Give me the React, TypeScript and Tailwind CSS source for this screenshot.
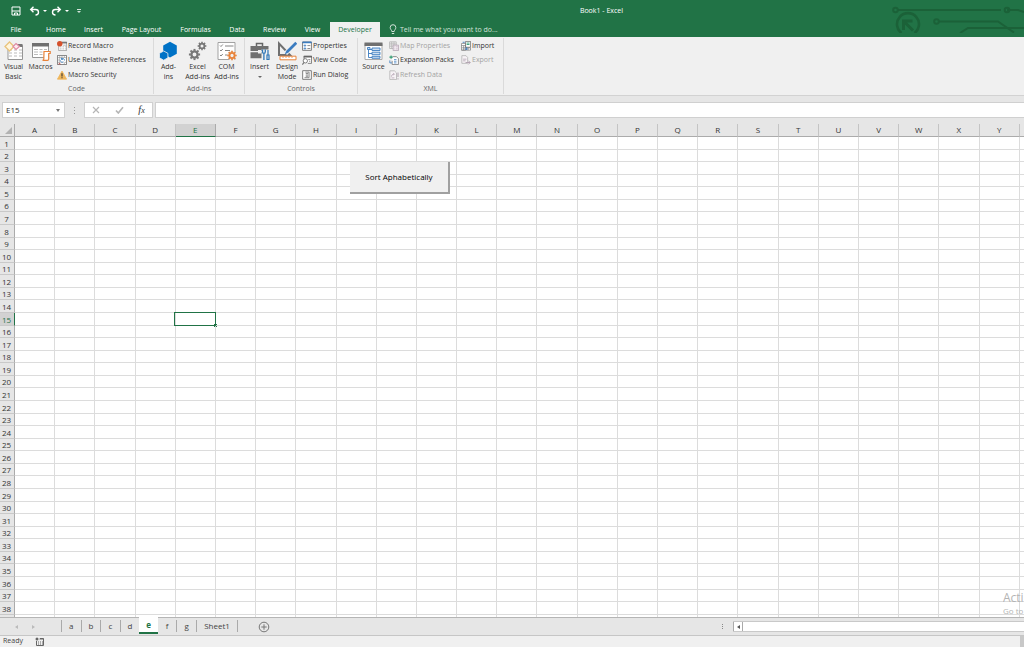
import type { ReactNode } from "react";

const columns = "ABCDEFGHIJKLMNOPQRSTUVWXY".split("");
const rows = Array.from({ length: 39 }, (_, i) => i + 1);
const selected = { column: "E", row: 15 };

const menuTabs = [
  { label: "File", width: "w-[32px] mr-[5px]" },
  { label: "Home", width: "w-[38px]" },
  { label: "Insert", width: "w-[37px]" },
  { label: "Page Layout", width: "w-[59px]" },
  { label: "Formulas", width: "w-[49px]" },
  { label: "Data", width: "w-[34px]" },
  { label: "Review", width: "w-[41px]" },
  { label: "View", width: "w-[35px]" },
];

const sheets = ["a", "b", "c", "d", "e", "f", "g"];

function Big({ children }: { children: ReactNode }) {
  return (
    <svg viewBox="0 0 20 20" className="h-5 w-5 shrink-0" fill="none" aria-hidden="true">
      {children}
    </svg>
  );
}

function Small({ children }: { children: ReactNode }) {
  return (
    <svg viewBox="0 0 12 12" className="h-[10px] w-[10px] shrink-0" fill="none" aria-hidden="true">
      {children}
    </svg>
  );
}

function Gear({ cx, cy, r, color }: { cx: number; cy: number; r: number; color: string }) {
  return (
    <g stroke={color}>
      <circle cx={cx} cy={cy} r={r * 0.62} strokeWidth={r * 0.46} />
      {[0, 45, 90, 135, 180, 225, 270, 315].map((a) => (
        <path
          key={a}
          d={`M${cx} ${cy - r * 0.75}V${cy - r * 1.12}`}
          strokeWidth={r * 0.4}
          transform={`rotate(${a} ${cx} ${cy})`}
        />
      ))}
    </g>
  );
}

const icons = {
  visualBasic: (
    <Big>
      <path d="M4 4.500h14.500v14H4z" fill="#fff" stroke="#8a8a8a" strokeWidth=".9" />
      <path d="M12 3h6.500v3H12z" fill="#777" />
      <path d="M5 9h3m2 0h3m2 0h3M5 12h3m2 0h3m2 0h3M5 15h3m2 0h3m2 0h3" stroke="#aaa" strokeWidth=".8" />
      <path d="M5.500 1l4.500 4.500-4.500 4.500L1 5.500z" fill="#fff5dc" stroke="#e9c47c" strokeWidth="1.300" />
      <path d="M12 2.500l3.500 3-3.500 3-3-3z" fill="#fdebf0" stroke="#df8da5" strokeWidth="1.200" />
    </Big>
  ),
  macros: (
    <Big>
      <path d="M1.500 2.500h16v14h-16z" fill="#fff" stroke="#8a8a8a" strokeWidth=".9" />
      <path d="M1 2h17v3.500H1z" fill="#707070" />
      <path d="M3 8.500h4m1.500 0h3m1.500 0h3M3 11h4m1.500 0h3M3 13.500h4m1.500 0h3" stroke="#aaa" strokeWidth=".8" />
      <path d="M13 10.500h6.200v2h-1.500V18c0 .8-.5 1.300-1.200 1.300h-5c.8 0 1.300-.5 1.300-1.300z" fill="#fff" stroke="#e8833a" strokeWidth="1.200" />
    </Big>
  ),
  record: (
    <Small>
      <path d="M2 1.500h9.500v10H2z" fill="#fff" stroke="#777" strokeWidth=".7" />
      <path d="M6 1h6v2H6z" fill="#777" />
      <path d="M3.500 7h2m1 0h2m1 0h1.500M3.500 9.500h2m1 0h2m1 0h1.500M7 5h4" stroke="#999" strokeWidth=".8" />
      <circle cx="3.300" cy="3.300" r="3.300" fill="#d5512c" />
    </Small>
  ),
  relative: (
    <Small>
      <path d="M.5.500h11v11H.5z" fill="#fff" stroke="#666" />
      <path d="M.5 3.200h11M.5 6h3M.5 8.800h11M3.300.500v11M6 .5v3M8.800.500v3m0 5v3" stroke="#888" strokeWidth=".7" />
      <path d="M3.500 3.500h6v5.500h-6z" fill="#fff" />
      <path d="M9 6.500c0-2-2-3-3.600-1.800M5.200 3.300v1.900h2M4 6.500c.2 2 2.200 2.800 3.600 1.600" stroke="#2e75b6" strokeWidth="1.100" />
      <path d="M2 9.500l2 2M4 9.500l-2 2" stroke="#c33" strokeWidth=".7" />
    </Small>
  ),
  security: (
    <Small>
      <path d="M6 1.300L11.500 11H.5z" fill="#efb65a" stroke="#efb65a" strokeLinejoin="round" />
      <path d="M6 4v3.800M6 8.700V10" stroke="#333" strokeWidth="1.300" />
    </Small>
  ),
  addins: (
    <Big>
      <path d="M11 .8l6.800 3.700v8.300L11 16.600 4.200 12.800V4.500z" fill="#0072c6" />
      <path d="M4.700 10l4.200 2.300v4.500l-4.200 2.400-4.200-2.400v-4.500z" fill="#0072c6" stroke="#f0f0f0" strokeWidth=".8" />
    </Big>
  ),
  excelAddins: (
    <Big>
      <Gear cx={6.500} cy={13.500} r={5} color="#777" />
      <Gear cx={14} cy={5} r={3.900} color="#777" />
    </Big>
  ),
  comAddins: (
    <Big>
      <path d="M1 1.500h17v17H1z" fill="#fff" stroke="#999" strokeWidth=".9" />
      <path d="M3 4.500l1 1 1.800-2M3 9l1 1 1.800-2M3 14l1 1 1.800-2M8 5h8.500M8 9.500h5M8 14h3" stroke="#777" strokeWidth=".9" />
      <circle cx="15" cy="14.500" r="4.800" fill="#f0f0f0" />
      <Gear cx={15} cy={14.500} r={4.200} color="#e8833a" />
    </Big>
  ),
  insert: (
    <Big>
      <path d="M6.500 5V2.500h6V5" stroke="#666" strokeWidth="1.500" />
      <path d="M.5 5h18v5H.5zM.5 11.200h18v6H.5z" fill="#707070" />
      <path d="M8 9h3v3.500H8z" fill="#f0f0f0" />
      <path d="M11.500 8.500H20V20h-8.500z" fill="#f0f0f0" />
      <path d="M12.500 8.500v2.300c0 1 .6 1.600 1.400 1.600s1.400-.6 1.400-1.600V8.500M13.900 12.400V19" stroke="#2e75b6" strokeWidth="1.300" />
      <path d="M18 9v5m-1 0h2v4.500h-2z" stroke="#2e75b6" strokeWidth="1.200" />
    </Big>
  ),
  design: (
    <Big>
      <path d="M2 2.500v11.500h11z" stroke="#707070" strokeWidth="2" />
      <path d="M3 15.200h16v3.600H3z" fill="#fff" stroke="#e8833a" />
      <path d="M6 15.500v1.500m3-1.500v1.500m3-1.500v1.500m3-1.500v1.500" stroke="#e8833a" strokeWidth=".8" />
      <path d="M19 2l-10.500 10.500" stroke="#f0f0f0" strokeWidth="4.500" />
      <path d="M19.300 1.700l-9.300 9.300" stroke="#3b7cc0" strokeWidth="2.700" />
      <path d="M9.300 9.700l2 2-3.500 1.500z" fill="#3b7cc0" />
    </Big>
  ),
  properties: (
    <Small>
      <path d="M.7 1.200h10.600v10H.7z" fill="#fff" stroke="#666" />
      <path d="M.5.700h11v2H.5z" fill="#3b7cc0" />
      <path d="M2.500 5h2v1h-2zM2.500 8.500h2v1h-2z" stroke="#3b7cc0" />
      <path d="M6.500 5.500H10M6.500 9H10" stroke="#777" />
    </Small>
  ),
  viewCode: (
    <Small>
      <path d="M2.500 5V1.500h9V10H7" fill="#fff" stroke="#666" />
      <path d="M2 1h10v2H2z" fill="#666" />
      <path d="M7.500 5.500h2.500M8.500 7.500H10" stroke="#777" />
      <circle cx="4" cy="7" r="2.600" fill="#fff" stroke="#666" />
      <path d="M2.200 9L.5 11.500" stroke="#666" strokeWidth="1.300" />
    </Small>
  ),
  runDialog: (
    <Small>
      <path d="M.8.800h10.400v10.400H.8z" fill="#fff" stroke="#666" />
      <path d="M4 2.500h4.500v6.700H3M4.500 4.200h3M4.500 6h3M4.500 7.500h3" stroke="#666" strokeWidth=".9" />
    </Small>
  ),
  source: (
    <Big>
      <path d="M1 2.500h17v16H1z" fill="#fff" stroke="#aaa" />
      <path d="M.5 1.500h18V5H.5z" fill="#707070" />
      <path d="M4.500 7v9.500H8M4.500 8.500H8M4.500 12.500H8" stroke="#3b7cc0" strokeWidth=".9" />
      <path d="M8 7h8v2.500H8zM8 11.200h8v2.500H8zM8 15.300h8v2H8zM3.500 6.500h2.500v2H3.500z" fill="#cfe0f2" stroke="#3b7cc0" strokeWidth=".9" />
    </Big>
  ),
  mapProperties: (
    <Small>
      <path d="M.7 1h8v8h-8zM.7 3.500h8M3.300 1v8M6 1v8M.7 6.200h8" stroke="#b5b5b5" />
      <path d="M5 5h6.500v6.500H5z" fill="#f5edf4" stroke="#b5a5b3" />
      <path d="M6.500 7h1m1 0h2m-4 2.500h1m1 0h2" stroke="#b5a5b3" strokeWidth=".9" />
    </Small>
  ),
  expansion: (
    <Small>
      <path d="M4.500 2h4.500l2.300 2.300V11.500H3.800V7" fill="#fff" stroke="#777" />
      <path d="M2.500.5v4M.5 2.500h4" stroke="#2f9b72" strokeWidth="1.300" />
      <path d="M6 5.500h3M6 7.500h3M6 9.500h3" stroke="#3b7cc0" strokeWidth=".9" />
      <path d="M1 6.500v3h2.500" stroke="#3b7cc0" />
    </Small>
  ),
  refresh: (
    <Small>
      <path d="M1 1h5.500L9 3.500v8H1z" fill="#f7f3f6" stroke="#b5b5b5" />
      <path d="M3 8c0-2 1-3 3-3M5 3.500L6.500 5 5 6.500M3 9.500h3.500" stroke="#b5a5b3" />
      <path d="M10.800 3v5.500m0 1.300V11.500" stroke="#b5a5b3" strokeWidth="1.300" />
    </Small>
  ),
  importIcon: (
    <Small>
      <path d="M.6 3h5v8h-5zM.6 5.500h5m-5 2.700h10.800V11H.6M3.200 5.500V11M8.500 8.200V11" fill="#fff" stroke="#777" strokeWidth=".8" />
      <path d="M5.500.5h6v7h-6z" fill="#fff" stroke="#555" strokeWidth=".8" />
      <path d="M6.800 2.500h3.400M6.800 4.200h3.400" stroke="#2f9b72" strokeWidth="1.100" />
      <path d="M2 1.500h2.500M6.500 7.500v3M5 9l1.500 1.800L8 9" stroke="#3b7cc0" strokeWidth="1.100" />
    </Small>
  ),
  exportIcon: (
    <Small>
      <path d="M1 .8h5L8 3v7H1z" fill="#f7f3f6" stroke="#b5b5b5" />
      <path d="M2.500 5h4m-4 2h3" stroke="#b5a5b3" />
      <path d="M5.500 9h5.500M8.800 6.800L11 9l-2.200 2.300" stroke="#b5a5b3" strokeWidth="1.200" />
    </Small>
  ),
};

function LargeButton({ icon, lines, width, caret }: { icon: ReactNode; lines: string[]; width: string; caret?: boolean }) {
  return (
    <button type="button" className={`flex shrink-0 flex-col items-center ${width}`}>
      {icon}
      <span className="mt-px flex flex-col items-center whitespace-nowrap leading-[10px]">
        {lines.map((line) => (
          <span key={line}>{line}</span>
        ))}
      </span>
      {caret && <span className="mt-1 border-x-2 border-t-2 border-x-transparent border-t-[#666]" />}
    </button>
  );
}

function SmallButton({ icon, label, disabled }: { icon: ReactNode; label: string; disabled?: boolean }) {
  return (
    <button
      type="button"
      disabled={disabled}
      className="flex items-center gap-px whitespace-nowrap disabled:text-[#a3a3a3]"
    >
      {icon}
      {label}
    </button>
  );
}

function Group({ title, width, children }: { title: string; width: string; children: ReactNode }) {
  return (
    <section aria-label={title} className={`flex shrink-0 flex-col border-r border-[#dadada] ${width}`}>
      <div className="flex h-[47px] items-stretch pt-[3px]">{children}</div>
      <div className="text-center leading-[10px] text-[#666]">{title}</div>
    </section>
  );
}

function Stack({ children }: { children: ReactNode }) {
  return <div className="-mt-[2px] grid h-[43px] grid-rows-3">{children}</div>;
}

function TitleBar() {
  return (
    <div className="flex h-[22px] items-center pl-[11px] text-white">
      <div className="flex flex-1 items-center">
        <button type="button" aria-label="Save" className="mr-2">
          <svg viewBox="0 0 10 10" className="h-[10px] w-[10px]" fill="none" stroke="#fff">
            <path d="M1 1h8v8H1zM1 5h8" />
            <path d="M3.500 9V7h3v2" />
          </svg>
        </button>
        <button type="button" aria-label="Undo" className="flex items-center gap-[3px]">
          <svg viewBox="0 0 11 10" className="h-[10px] w-[11px]" fill="none" stroke="#fff" strokeWidth="1.400">
            <path d="M4.500.7L1.700 3.500l2.800 2.800M2 3.500h4.500c4 0 4 5.500 0 5.500" />
          </svg>
          <span className="border-x-2 border-t-2 border-x-transparent border-t-white" />
        </button>
        <button type="button" aria-label="Redo" className="ml-1 flex items-center gap-[3px]">
          <svg viewBox="0 0 11 10" className="h-[10px] w-[11px]" fill="none" stroke="#fff" strokeWidth="1.400">
            <path d="M6.500.7l2.800 2.800-2.800 2.800M9 3.500H4.500c-4 0-4 5.500 0 5.500" />
          </svg>
          <span className="border-x-2 border-t-2 border-x-transparent border-t-white" />
        </button>
        <button type="button" aria-label="Customize toolbar" className="ml-2 flex flex-col items-center gap-px">
          <span className="h-px w-1 bg-white/80" />
          <span className="border-x-2 border-t-2 border-x-transparent border-t-white/80" />
        </button>
      </div>
      <h1 className="mr-[401px]">Book1 - Excel</h1>
    </div>
  );
}

function Circuit() {
  return (
    <svg
      viewBox="0 0 134 33"
      className="pointer-events-none absolute right-0 top-0 h-[33px] w-[134px]"
      fill="none"
      stroke="#1b6138"
      strokeWidth="2"
      aria-hidden="true"
    >
      <path d="M8 10h103m6 0h11l6 2M48 21.500h60l16 11M70 33l8-5h56" />
      <circle cx="5.500" cy="10" r="2.300" />
      <circle cx="117" cy="10" r="2.300" />
      <circle cx="46.500" cy="21.500" r="2.300" />
      <path d="M11.500 33a11 11 0 1 1 13 0" strokeWidth="2.600" />
      <path d="M13.500 30v-9h9M14.500 22l8.500 8.500" strokeWidth="3" />
    </svg>
  );
}

function Ribbon() {
  return (
    <div className="flex h-[59px] border-b border-[#d2d2d2] bg-[#f0f0f0] pb-px pt-px text-[#333]">
      <Group title="Code" width="w-[154px]">
        <LargeButton icon={icons.visualBasic} lines={["Visual", "Basic"]} width="w-[27px]" />
        <LargeButton icon={icons.macros} lines={["Macros"]} width="w-[27px]" />
        <div className="ml-[3px]">
          <Stack>
            <SmallButton icon={icons.record} label="Record Macro" />
            <SmallButton icon={icons.relative} label="Use Relative References" />
            <SmallButton icon={icons.security} label="Macro Security" />
          </Stack>
        </div>
      </Group>
      <Group title="Add-ins" width="w-[91px]">
        <LargeButton icon={icons.addins} lines={["Add-", "ins"]} width="w-[29px]" />
        <LargeButton icon={icons.excelAddins} lines={["Excel", "Add-ins"]} width="w-[29px]" />
        <LargeButton icon={icons.comAddins} lines={["COM", "Add-ins"]} width="w-[29px]" />
      </Group>
      <Group title="Controls" width="w-[113px]">
        <LargeButton icon={icons.insert} lines={["Insert"]} width="w-[29px]" caret />
        <LargeButton icon={icons.design} lines={["Design", "Mode"]} width="w-[26px]" />
        <div className="ml-[2px]">
          <Stack>
            <SmallButton icon={icons.properties} label="Properties" />
            <SmallButton icon={icons.viewCode} label="View Code" />
            <SmallButton icon={icons.runDialog} label="Run Dialog" />
          </Stack>
        </div>
      </Group>
      <Group title="XML" width="w-[146px]">
        <LargeButton icon={icons.source} lines={["Source"]} width="w-[31px]" />
        <div className="w-[72px]">
          <Stack>
            <SmallButton icon={icons.mapProperties} label="Map Properties" disabled />
            <SmallButton icon={icons.expansion} label="Expansion Packs" />
            <SmallButton icon={icons.refresh} label="Refresh Data" disabled />
          </Stack>
        </div>
        <Stack>
          <SmallButton icon={icons.importIcon} label="Import" />
          <SmallButton icon={icons.exportIcon} label="Export" disabled />
        </Stack>
      </Group>
    </div>
  );
}

function FormulaBar() {
  return (
    <div className="flex h-[28px] items-center bg-[#e6e6e6] pl-[2px] text-[8px] text-[#333]">
      <div className="flex h-4 w-[63px] items-center border border-[#d0d0d0] bg-white pr-1">
        <input aria-label="Name Box" defaultValue="E15" className="w-full min-w-0 bg-transparent pl-[3px] outline-none" />
        <span className="border-x-2 border-t-[3px] border-x-transparent border-t-[#777]" />
      </div>
      <div className="flex w-[19px] flex-col items-center gap-[2px]">
        <span className="h-px w-px bg-[#999]" />
        <span className="h-px w-px bg-[#999]" />
        <span className="h-px w-px bg-[#999]" />
      </div>
      <div className="flex h-4 w-[69px] items-center justify-around border border-[#d0d0d0] bg-white">
        <button type="button" aria-label="Cancel">
          <svg viewBox="0 0 8 8" className="h-2 w-2" stroke="#b5b5b5" strokeWidth="1.200">
            <path d="M1 1l6 6M7 1L1 7" />
          </svg>
        </button>
        <button type="button" aria-label="Enter">
          <svg viewBox="0 0 9 8" className="h-2 w-[9px]" fill="none" stroke="#b5b5b5" strokeWidth="1.600">
            <path d="M1 4.500L3.300 7 8 1.200" />
          </svg>
        </button>
        <button type="button" aria-label="Insert Function" className="font-['Liberation_Serif',serif] text-[10px] italic leading-[10px]">
          f<span className="text-[8px]">x</span>
        </button>
      </div>
      <input aria-label="Formula Bar" className="ml-[2px] h-4 min-w-0 flex-1 border-y border-l border-[#d0d0d0] bg-white px-1 outline-none" />
    </div>
  );
}

function Grid() {
  return (
    <div className="relative min-h-0 flex-1 overflow-hidden bg-white">
      <table className="w-full table-fixed border-separate border-spacing-0 text-[8px] text-[#333]">
        <colgroup>
          <col className="w-[15px]" />
          {columns.map((c) => (
            <col key={c} />
          ))}
          <col className="w-1" />
        </colgroup>
        <thead>
          <tr className="h-[13px] bg-[#e6e6e6]">
            <th className="border-b border-r border-[#ababab] p-0">
              <span className="ml-auto mr-[2px] block h-0 w-0 border-b-[7px] border-l-[7px] border-b-[#b2b2b2] border-l-transparent" />
            </th>
            {columns.map((c) => (
              <th
                key={c}
                scope="col"
                className={`border-b border-r p-0 font-normal leading-3 ${
                  c === selected.column ? "border-b-[#217346] border-r-[#ababab] bg-[#d2d2d2] text-[#217346]" : "border-b-[#ababab] border-r-[#c4c4c4]"
                }`}
              >
                {c}
              </th>
            ))}
            <td className="border-b border-[#ababab] p-0" />
          </tr>
        </thead>
        <tbody>
          {rows.map((r) => (
            <tr key={r} className={r % 7 === 0 || (r % 7) % 2 === 1 ? "h-[13px]" : "h-3"}>
              <th
                scope="row"
                className={`border-b border-r border-b-[#c9c9c9] p-0 pr-px font-normal leading-[11px] ${
                  r === selected.row ? "border-r-[#217346] bg-[#d2d2d2] text-[#217346]" : "border-r-[#ababab] bg-[#e6e6e6]"
                }`}
              >
                {r < 39 ? r : ""}
              </th>
              {columns.map((c) => (
                <td key={c} className="relative border-b border-r border-[#dcdcdc] p-0">
                  {c === selected.column && r === selected.row && (
                    <div className="absolute -bottom-px -left-[2px] -right-px -top-px border border-[#217346]">
                      <span className="absolute -bottom-[2px] -right-[2px] h-[3px] w-[3px] bg-[#217346]" />
                    </div>
                  )}
                </td>
              ))}
              <td className="border-b border-[#dcdcdc] p-0" />
            </tr>
          ))}
        </tbody>
      </table>
      <button
        type="button"
        className="absolute left-[350px] top-[38px] h-8 w-[100px] border-b-2 border-r-2 border-[#a0a0a0] bg-[#f0f0f0] text-[8px] text-black"
      >
        Sort Aphabetically
      </button>
      <div className="pointer-events-none absolute bottom-0 right-0 w-[21px] overflow-hidden whitespace-nowrap text-[#b4b4b4]">
        <div className="text-[12px] leading-[14px]">Acti</div>
        <div className="text-[8px] leading-[12px]">Go to</div>
      </div>
    </div>
  );
}

function SheetTabs() {
  return (
    <div className="flex h-[19px] shrink-0 items-stretch border-y border-b-[#c6c6c6] border-t-[#b5b5b5] bg-[#e6e6e6] text-[8px] text-[#444]">
      <div className="flex w-[61px] items-center gap-[14px] pl-[15px]">
        <button type="button" aria-label="Previous sheets" className="border-y-2 border-r-[3px] border-y-transparent border-r-[#bbb]" />
        <button type="button" aria-label="Next sheets" className="border-y-2 border-l-[3px] border-y-transparent border-l-[#bbb]" />
      </div>
      <div className="flex w-[177px]">
        {sheets.map((s) =>
          s === "e" ? (
            <button key={s} type="button" className="-mt-px mb-px flex-1 border-b-2 border-[#217346] bg-white font-bold text-[#217346]">
              {s}
            </button>
          ) : (
            <button
              key={s}
              type="button"
              className={`mb-[3px] mt-[2px] flex-1 border-[#aaa] ${s === "a" ? "border-x" : s === "d" ? "" : "border-r"}`}
            >
              {s}
            </button>
          ),
        )}
        <button type="button" className="mb-[3px] mt-[2px] w-[41px] border-r border-[#aaa]">Sheet1</button>
      </div>
      <button type="button" aria-label="New sheet" className="ml-5">
        <svg viewBox="0 0 12 12" className="h-3 w-3" fill="none" stroke="#777">
          <circle cx="6" cy="6" r="4.800" />
          <path d="M6 3.300v5.400M3.300 6h5.400" />
        </svg>
      </button>
      <div className="flex-1" />
      <div className="mr-[10px] flex flex-col justify-center gap-px">
        <span className="h-px w-px bg-[#888]" />
        <span className="h-px w-px bg-[#888]" />
        <span className="h-px w-px bg-[#888]" />
      </div>
      <div className="my-[3px] flex w-[291px] border-y border-[#c9c9c9] bg-white">
        <button type="button" aria-label="Scroll left" className="flex w-[10px] items-center justify-center border-x border-[#aaa]">
          <span className="border-y-2 border-r-[3px] border-y-transparent border-r-[#555]" />
        </button>
      </div>
    </div>
  );
}

function StatusBar() {
  return (
    <footer className="flex h-[11px] shrink-0 items-start bg-[#f0f0f0] text-[#444]">
      <span className="pl-[3px]">Ready</span>
      <button type="button" aria-label="Record macro" className="ml-3 mt-px">
        <svg viewBox="0 0 9 9" className="h-[9px] w-[9px]" fill="none" stroke="#666">
          <path d="M1.500 4v4.500h7V1.500H5" />
          <circle cx="2" cy="2" r="1.500" fill="#666" stroke="none" />
          <path d="M4.500 2h4M3 5h1m1 0h1m1 0h1M3 7h1m1 0h1m1 0h1" />
        </svg>
      </button>
      <span className="ml-auto h-full w-1 bg-[#c8c8c8]" />
    </footer>
  );
}

export default function App() {
  return (
    <div className="flex h-screen flex-col overflow-hidden font-['Open_Sans','Noto_Sans',sans-serif] text-[7px] leading-[10px]">
      <header className="relative shrink-0 bg-[#217346]">
        <Circuit />
        <TitleBar />
        <nav className="flex h-[15px] text-white">
          {menuTabs.map((t) => (
            <button key={t.label} type="button" className={`whitespace-nowrap ${t.width}`}>
              {t.label}
            </button>
          ))}
          <button type="button" className="w-[50px] bg-[#f0f0f0] text-[#217346]">Developer</button>
          <button type="button" className="ml-[9px] flex items-center gap-[3px] whitespace-nowrap text-[#d3e3da]">
            <svg viewBox="0 0 8 11" className="h-[11px] w-2" fill="none" stroke="#d3e3da">
              <path d="M2.800 7.500C2.800 6 1.200 5.500 1.200 3.500a2.800 2.800 0 0 1 5.600 0c0 2-1.600 2.500-1.600 4zM2.800 9.500h2.400" />
            </svg>
            Tell me what you want to do...
          </button>
        </nav>
      </header>
      <Ribbon />
      <FormulaBar />
      <Grid />
      <SheetTabs />
      <StatusBar />
    </div>
  );
}
